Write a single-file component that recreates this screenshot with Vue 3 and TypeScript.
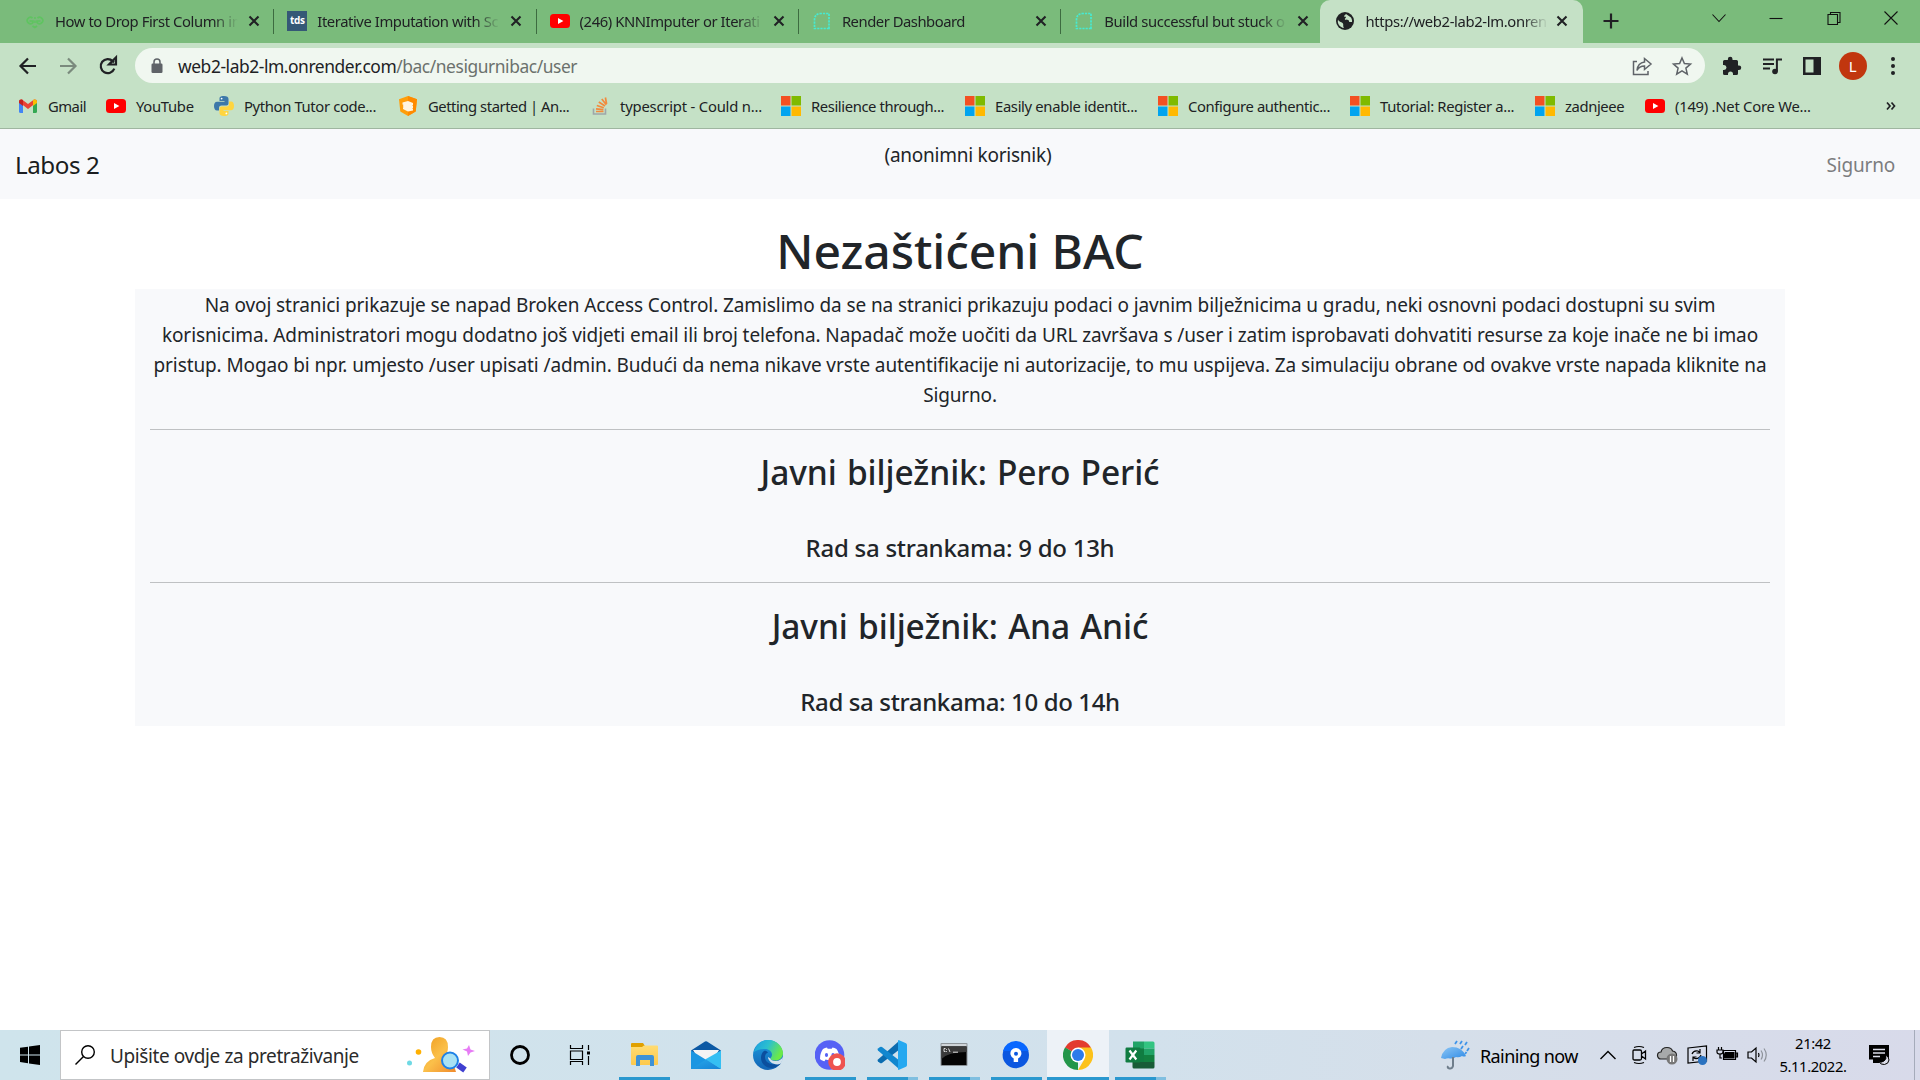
<script setup lang="ts">
interface Tab { icon: string; title: string; ls: number; active?: boolean }
interface Bookmark { icon: string; label: string; width: number; ls: number }
interface App { icon: string; state: '' | 'open' | 'multi' | 'active' }

const tabs: Tab[] = [
  { icon: 'gfg', title: 'How to Drop First Column in', ls: -0.42 },
  { icon: 'tds', title: 'Iterative Imputation with Sc', ls: -0.42 },
  { icon: 'yt', title: '(246) KNNImputer or Iterati', ls: -0.42 },
  { icon: 'render', title: 'Render Dashboard', ls: -0.48 },
  { icon: 'render', title: 'Build successful but stuck o', ls: -0.38 },
  { icon: 'globe', title: 'https://web2-lab2-lm.onren', ls: -0.36, active: true },
]

const bookmarks: Bookmark[] = [
  { icon: 'gmail', label: 'Gmail', width: 38, ls: -0.5 },
  { icon: 'yt', label: 'YouTube', width: 58, ls: -0.3 },
  { icon: 'python', label: 'Python Tutor code...', width: 134, ls: -0.36 },
  { icon: 'nest', label: 'Getting started | An...', width: 142, ls: -0.45 },
  { icon: 'stack', label: 'typescript - Could n...', width: 141, ls: -0.2 },
  { icon: 'ms', label: 'Resilience through...', width: 134, ls: -0.4 },
  { icon: 'ms', label: 'Easily enable identit...', width: 143, ls: -0.33 },
  { icon: 'ms', label: 'Configure authentic...', width: 142, ls: -0.37 },
  { icon: 'ms', label: 'Tutorial: Register a...', width: 135, ls: -0.35 },
  { icon: 'ms', label: 'zadnjeee', width: 60, ls: -0.4 },
  { icon: 'yt', label: '(149) .Net Core We...', width: 140, ls: -0.25 },
]

const apps: App[] = [
  { icon: 'explorer', state: 'open' },
  { icon: 'mail', state: '' },
  { icon: 'edge', state: '' },
  { icon: 'discord', state: 'open' },
  { icon: 'vscode', state: 'multi' },
  { icon: 'cmd', state: 'multi' },
  { icon: 'sourcetree', state: 'open' },
  { icon: 'chrome', state: 'active' },
  { icon: 'excel', state: 'multi' },
]

const intro: string[] = [
  'Na ovoj stranici prikazuje se napad Broken Access Control. Zamislimo da se na stranici prikazuju podaci o javnim bilježnicima u gradu, neki osnovni podaci dostupni su svim',
  'korisnicima. Administratori mogu dodatno još vidjeti email ili broj telefona. Napadač može uočiti da URL završava s /user i zatim isprobavati dohvatiti resurse za koje inače ne bi imao',
  'pristup. Mogao bi npr. umjesto /user upisati /admin. Budući da nema nikave vrste autentifikacije ni autorizacije, to mu uspijeva. Za simulaciju obrane od ovakve vrste napada kliknite na',
  'Sigurno.',
]

const notaries = [
  { name: 'Pero Perić', hours: '9 do 13h' },
  { name: 'Ana Anić', hours: '10 do 14h' },
]
</script>

<template>
  <div class="screen">
    <svg class="defs" width="0" height="0">
      <defs>
        <linearGradient id="gEdgeA" x1="0" y1="0" x2="1" y2="0.4"><stop offset="0" stop-color="#1b9de0" /><stop offset=".5" stop-color="#2bbfd0" /><stop offset="1" stop-color="#6bea48" /></linearGradient>
        <linearGradient id="gEdgeB" x1="0" y1="0" x2="0" y2="1"><stop offset="0" stop-color="#1d9ce0" /><stop offset="1" stop-color="#1263b4" /></linearGradient>
        <linearGradient id="gPerson" x1="0" y1="0" x2="1" y2="1"><stop offset="0" stop-color="#ee9a1c" /><stop offset=".5" stop-color="#fbc04a" /><stop offset="1" stop-color="#f08a2c" /></linearGradient>
        <linearGradient id="gFolder" x1="0" y1="0" x2="0" y2="1"><stop offset="0" stop-color="#ffdc72" /><stop offset="1" stop-color="#fdc94d" /></linearGradient>
        <linearGradient id="gMail" x1="0" y1="0" x2="1" y2="1"><stop offset="0" stop-color="#28a8ea" /><stop offset="1" stop-color="#1683d6" /></linearGradient>
        <linearGradient id="gUmb" x1="0" y1="0" x2="1" y2="1"><stop offset="0" stop-color="#8cc6f5" /><stop offset="1" stop-color="#2f8be6" /></linearGradient>
        <symbol id="i-gfg" viewBox="0 0 20 20"><g fill="none" stroke="#5fc460" stroke-width="1.7"><path d="M7.500 7A3.200 3.200 0 1 0 8 11.500V10H4.500M12.500 7A3.200 3.200 0 1 1 12 11.500V10h3.500" /><path d="M7.500 15l2.300 1.500 2.300-1.500" /></g><path d="M9.200 6h1.500v2H9.200zM9.200 9.500h1.500v2.500H9.200z" fill="#5fc460" /></symbol>
        <symbol id="i-yt" viewBox="0 0 20 20"><rect x="0" y="3" width="20" height="14" rx="3.500" fill="#f00" /><path d="M8 7l5.400 3L8 13z" fill="#fff" /></symbol>
        <symbol id="i-render" viewBox="0 0 20 20"><path d="M17 17.500H2.500V9q0-6.500 6.500-6.500h8z" fill="none" stroke="#46ead2" stroke-width="1.700" stroke-dasharray="2.200 1" /></symbol>
        <symbol id="i-globe" viewBox="0 0 20 20"><circle cx="10" cy="10" r="9" fill="#202124" /><path d="M3 8.500c1 2.500 3 2 4.500 3.500s0 2.500 1.500 5C5 16.500 2 13 3 8.500zM11 3l5 3.500c1 2 1.300 3 1 4.500-2 0-3 .5-3-1s-3-1-4-1.500 1-1.500 1-2.500-2 .5-2-1z" fill="#c5e1c6" /></symbol>
        <symbol id="i-gmail" viewBox="0 0 20 20"><path d="M1 4.500v11q0 1.500 1.500 1.500H5V8z" fill="#4285f4" /><path d="M19 4.500v11q0 1.500-1.500 1.500H15V8z" fill="#34a853" /><path d="M1 6v-.5q0-2.500 3-2L10 8l6-4.500q3-.5 3 2V6l-9 7z" fill="#ea4335" /><path d="M15 4.300l1-.8q3-.5 3 2V7l-4 3z" fill="#fbbc04" /><path d="M1 5.500q0-2.500 3-2l1 .8V10L1 7z" fill="#c5221f" /></symbol>
        <symbol id="i-python" viewBox="0 0 20 20"><path d="M10 0C5.800 0 5.500 1.500 5.500 2.800V5h5v.8H3C1 5.800 0 7.500 0 10s1 4.500 3 4.500h2v-2.800Q5 9.500 7.500 9.500h5q2 0 2-2V3Q14.500 0 10 0z" fill="#3d78a9" /><path d="M10 20c4.200 0 4.500-1.500 4.500-2.800V15h-5v-.8H17c2 0 3-1.700 3-4.200s-1-4.500-3-4.500h-2v2.800q0 2.200-2.500 2.200h-5q-2 0-2 2V17q0 3 4.500 3z" fill="#ffd53f" /><circle cx="7.600" cy="2.600" r=".9" fill="#fff" /><circle cx="12.400" cy="17.400" r=".9" fill="#fff" /></symbol>
        <symbol id="i-nest" viewBox="0 0 20 20"><path d="M10 0l9 3.200-1.300 12.300L10 20l-7.700-4.500L1 3.200z" fill="#ff9e0b" /><path d="M10 0l9 3.200-1.300 12.300L10 20z" fill="#ff8a00" /><path d="M4.500 6.500L10 5l5 2v2l-.8.500.8.500v2l-.8.500.8.500v1.500L10 15.500 5 13v-1.500l.8-.5L5 10.500V9.500l.8-.5-1.300-.5z" fill="#fff4e0" /></symbol>
        <symbol id="i-stack" viewBox="0 0 20 20"><path d="M3.500 12.500v5.500h12v-5.500" fill="none" stroke="#9fa6a9" stroke-width="1.600" /><path d="M6 15.500h7.500M6 12.800l7.400.9M6.800 9.500l7 2.200M8.800 6l6.200 4M11.800 3l4.500 5.800M15.400 1.500l1.200 6.500" stroke="#f28a3c" stroke-width="1.700" /></symbol>
        <symbol id="i-ms" viewBox="0 0 20 20"><path d="M0 0h9.500v9.500H0z" fill="#f35022" /><path d="M10.500 0H20v9.500h-9.500z" fill="#7fba00" /><path d="M0 10.500h9.500V20H0z" fill="#01a4ef" /><path d="M10.500 10.500H20V20h-9.500z" fill="#ffb901" /></symbol>

        <symbol id="i-explorer" viewBox="0 0 30 30"><path d="M2 4q0-1 1-1h11l2 3-2 3H2z" fill="#e0a000" /><path d="M2 7h11l2-1.500h13q1 0 1 1V24q0 1-1 1H3q-1 0-1-1z" fill="url(#gFolder)" /><path d="M7 26V17q0-2 2-2h14q2 0 2 2v9h-4v-6h-10v6z" fill="#3e92d6" /></symbol>
        <symbol id="i-mail" viewBox="0 0 30 30"><path d="M0 10.500L14 1.500q1-.7 2 0l14 9L24 20H5z" fill="#0c59a4" /><path d="M2 10h26l-6 10H8z" fill="#f4f4f4" /><path d="M0 10.500L30 29H0z" fill="#1b96e2" /><path d="M30 10.500V29L14 19.500z" fill="#35bff3" /><path d="M0 29l15-9.500L30 29z" fill="url(#gMail)" /></symbol>
        <symbol id="i-edge" viewBox="0 0 30 30"><circle cx="15" cy="15" r="15" fill="url(#gEdgeB)" /><path d="M1 12C3 4 9 0 15 0c9 0 15 7 15 13 0 5-4 7.500-7.500 7.500-3.500 0-5-1-5-2s1.500-1.500 1.500-4c0-3-3-5.500-7-5.500-5 0-9 1.500-11 3z" fill="url(#gEdgeA)" /><path d="M11 11c-4 3-4 10 0 14 4 4 11 4 16-.5 1.500-1.500.5-2-.5-1.500C21 26 12 24 12 17c0-2 1-4 3-4.500-1-1.500-3-2-4-1.500z" fill="#0b4f9e" /><path d="M17.500 18.500c0 1.300 2 2.500 5 2.500 4 0 6-2 7.500-4-.2 4-2 6-2.500 6.800C22 26 15 22 15 17z" fill="#d3e2ec" /></symbol>
        <symbol id="i-discord" viewBox="0 0 30 30"><circle cx="14.500" cy="15" r="14.800" fill="#5661f5" /><path d="M5 19c0-5 1.500-8 3-10q2-1.200 4-1.500l.7 1.200h4L17.500 7.500q2 .3 4 1.500c1.500 2 3 5 3 10-1.500 1.500-3 2-4.500 2.200l-1-1.700q-4.200 1.400-8.500 0l-1 1.700C8 21 6.500 20.500 5 19z" fill="#fff" /><ellipse cx="11.500" cy="15" rx="1.600" ry="1.900" fill="#5661f5" /><ellipse cx="18" cy="15" rx="1.600" ry="1.900" fill="#5661f5" /><circle cx="22" cy="22" r="8.800" fill="#ee5350" /><circle cx="22" cy="22" r="3.900" fill="#fff" /></symbol>
        <symbol id="i-vscode" viewBox="0 0 30 30"><path d="M22 1L1 19.500q-1 1 0 2L3 23q1 .7 2 0L23 9z" fill="#0b6cb0" /><path d="M22 29L1 10.500q-1-1 0-2L3 7q1-.7 2 0l18 14z" fill="#1187cf" /><path d="M21.500 0L29 3.200q1 .5 1 1.800v20q0 1.300-1 1.800L21.500 30q-.8-.5-.5-2V2q-.2-1.500.5-2z" fill="#25a8f0" /></symbol>
        <symbol id="i-cmd" viewBox="0 0 30 30"><rect x="1.500" y="3" width="27" height="23" rx="1" fill="#8d9499" /><rect x="2.500" y="4" width="25" height="2" fill="#cfd4d8" /><path d="M2.500 6.500h25V25h-25z" fill="#050505" /><path d="M2.500 6.500h25V12Q9 12 2.500 19z" fill="#3a3a3a" /><path d="M5 8.500v3M7.500 9v.8M7.500 11v.8M9.500 8.500l1.500 3.500M14 12.200h5M5 8.500h1.500M5 11.500h1.500" stroke="#ddd" stroke-width="1" /></symbol>
        <symbol id="i-sourcetree" viewBox="0 0 30 30"><circle cx="14.800" cy="15" r="13.200" fill="#0b57e0" /><path d="M2 11a13.200 13.200 0 0 1 25.600 0z" fill="#0867ff" /><path d="M12.700 22v-3.500a5.500 5.500 0 1 1 4.400 0V22z" fill="#fff" /><circle cx="15" cy="13.800" r="2" fill="#0b57e0" /></symbol>
        <symbol id="i-chrome" viewBox="0 0 30 30"><path d="M15 15L2 7.500A15 15 0 0 1 28 7.500z" fill="#e33b2e" /><path d="M15 15L15 30A15 15 0 0 1 2 7.500z" fill="#23964a" /><path d="M28 7.500H15v8l6.500 3.500L15 30A15 15 0 0 0 28 7.500z" fill="#fcc21b" /><path d="M2 7.500L8.700 19 15 16z" fill="#23964a" /><circle cx="15" cy="15" r="7.500" fill="#fff" /><circle cx="15" cy="15" r="6" fill="#2d7bea" /></symbol>
        <symbol id="i-excel" viewBox="0 0 30 30"><path d="M8 1.500h11V15H8z" fill="#21a366" /><path d="M19 1.500h9q1.500 0 1.500 1.500v5.500H19z" fill="#33c481" /><path d="M19 8.500h10.500V15H19z" fill="#21a366" /><path d="M8 8.500h11V22H8z" fill="#107c41" /><path d="M19 15h10.500v7H19z" fill="#12803f" /><path d="M7.500 22h22v5q0 1.500-1.500 1.500H9q-1.500 0-1.500-1.500z" fill="#185c37" /><rect x=".5" y="7.500" width="15" height="15" rx="1.200" fill="#107c41" /><path d="M4.500 10.500l6.800 9M11.300 10.500l-6.800 9" stroke="#fff" stroke-width="2.200" /></symbol>
      </defs>
    </svg>

    <header class="tabstrip">
      <div class="tabs">
        <div v-for="(t, i) in tabs" :key="i" class="tab" :class="{ active: t.active, last: i === 4 }">
          <span v-if="t.icon === 'tds'" class="tds">tds</span>
          <svg v-else class="ico"><use :href="'#i-' + t.icon" /></svg>
          <span class="tab-title" :style="{ letterSpacing: t.ls + 'px' }">{{ t.title }}</span>
          <svg class="x" viewBox="0 0 12 12"><path d="M1.500 1.500l9 9M10.500 1.500l-9 9" /></svg>
        </div>
      </div>
      <svg class="plus" viewBox="0 0 16 16"><path d="M8 .5v15M.5 8h15" /></svg>
      <div class="winctl">
        <svg viewBox="0 0 16 16"><path d="M1.500 4.500L8 11.500l6.500-7" /></svg>
        <svg viewBox="0 0 16 16"><path d="M1.500 8.500h13" stroke-width="1.300" /></svg>
        <svg viewBox="0 0 16 16"><path d="M2 4.500h9.500v10H2zM4.500 4V2.500H14V12.500h-2" stroke-width="1.300" /></svg>
        <svg viewBox="0 0 16 16"><path d="M1.500 1.500l13 13M14.500 1.500l-13 13" /></svg>
      </div>
    </header>

    <div class="toolbar">
      <svg class="nav" viewBox="0 0 20 20"><path d="M18 10H3M10 2.500L2.500 10l7.500 7.500" /></svg>
      <svg class="nav dim" viewBox="0 0 20 20"><path d="M2 10h15M10 2.500l7.500 7.500-7.500 7.500" /></svg>
      <svg class="nav" viewBox="0 0 20 20"><path d="M16.300 12.600A7 7 0 1 1 14.800 5.200L16 6.500" /><path d="M18 1.500v7h-7z" fill="#202124" stroke="none" /></svg>
      <div class="omnibox">
        <svg class="lock" viewBox="0 0 12 16"><rect x=".5" y="5.500" width="11" height="9.500" rx="1.200" fill="#5f6368" /><path d="M3 6V4a3 3 0 0 1 6 0v2" fill="none" stroke="#5f6368" stroke-width="1.500" /></svg>
        <span class="url">web2-lab2-lm.onrender.com<i>/bac/nesigurnibac/user</i></span>
        <svg class="oi" viewBox="0 0 20 20"><path d="M5 5.500H1.500v13H16V15M12.500 2.500L19 8l-6.500 5.500V10C9 10 6.500 11.500 5 14.500 5.500 9.500 8 6.500 12.500 6z" /></svg>
        <svg class="oi star" viewBox="0 0 20 20"><path d="M10 2l2.400 5.600 6.100.5-4.600 4 1.400 6L10 14.900 4.700 18.100l1.400-6-4.600-4 6.100-.5z" /></svg>
      </div>
      <div class="ext">
        <svg viewBox="0 0 20 20"><path fill="#202124" d="M17 9.500h-1V5.500q0-1.500-1.500-1.500h-4V3a2.300 2.300 0 0 0-4.600 0v1H2.500Q1 4 1 5.500V9h1a2.500 2.500 0 0 1 0 5H1v3.500Q1 19 2.500 19H6v-1a2.500 2.500 0 0 1 5 0v1h3.500q1.500 0 1.500-1.500V14h1a2.250 2.250 0 0 0 0-4.500z" /></svg>
        <svg viewBox="0 0 20 20"><path d="M1 3.500h11M1 8h11M1 12.500h7" fill="none" stroke="#202124" stroke-width="2" /><circle cx="13" cy="15.500" r="2.800" fill="#202124" /><path d="M14.900 15.500V3.500H20" fill="none" stroke="#202124" stroke-width="2" /></svg>
        <svg viewBox="0 0 20 20"><path fill="#202124" fill-rule="evenodd" d="M1 1h18v18H1zM3.500 3.500v13h8v-13z" /></svg>
        <span class="avatar">L</span>
        <svg viewBox="0 0 20 20" fill="#202124"><circle cx="10" cy="3" r="2" /><circle cx="10" cy="10" r="2" /><circle cx="10" cy="17" r="2" /></svg>
      </div>
    </div>

    <nav class="bookmarks">
      <div v-for="(b, i) in bookmarks" :key="i" class="bm">
        <svg class="ico"><use :href="'#i-' + b.icon" /></svg>
        <span :style="{ width: b.width + 'px', letterSpacing: b.ls + 'px' }">{{ b.label }}</span>
      </div>
      <svg class="more" viewBox="0 0 10 10"><path d="M1 1.500L4 5 1 8.500M5.500 1.500l3 3.500-3 3.500" /></svg>
    </nav>

    <div class="navbar">
      <span class="brand">Labos 2</span>
      <span class="who">(anonimni korisnik)</span>
      <span class="safe">Sigurno</span>
    </div>

    <main>
      <h1>Nezaštićeni BAC</h1>
      <section class="card">
        <p><span v-for="(l, i) in intro" :key="i" :class="'l' + i">{{ l }}</span></p>
        <article v-for="n in notaries" :key="n.name">
          <hr />
          <h3>Javni bilježnik: {{ n.name }}</h3>
          <h5>Rad sa strankama: {{ n.hours }}</h5>
        </article>
      </section>
    </main>

    <footer class="taskbar">
      <div class="start"><svg viewBox="0 0 20 20" width="20" height="20"><path d="M0 2.800L8 1.700V9.400H0zM9 1.500L20 0v9.400H9zM0 10.400h8v7.800L0 17.100zM9 10.400h11V20L9 18.400z" /></svg></div>
      <div class="search">
        <svg class="mag" viewBox="0 0 20 20"><circle cx="13" cy="7" r="6.300" /><path d="M8.500 11.500L.5 19.500" /></svg>
        <span>Upišite ovdje za pretraživanje</span>
        <svg class="persona" viewBox="0 0 68 36"><circle cx="2.500" cy="26" r="2.500" fill="#6fd9e4" /><circle cx="11.500" cy="15" r="2.800" fill="#ffb000" /><path d="M16 35q1-11 12-14-4-5-4-11 0-10 8.500-10T41 10q0 6-4 11 10 3 12 14z" fill="url(#gPerson)" /><path d="M51 28l7 5" stroke="#3f3fd0" stroke-width="6" /><circle cx="43" cy="23.500" r="8" fill="#a9e2f4" stroke="#1f82e6" stroke-width="2" /><path d="M62 8l1.500 4.500L68 14l-4.500 1.500L61 19l-1-4.500-4.500-2 4.500-1z" fill="#e77cf5" /></svg>
      </div>
      <div class="cell"><svg viewBox="0 0 22 22" width="22" height="22"><circle cx="11" cy="11" r="8.500" fill="none" stroke="#000" stroke-width="2.800" /></svg></div>
      <div class="cell tv"><svg viewBox="0 0 20 20" width="20" height="20"><path d="M.5 0v3.500h12V0M.5 20v-3.500h12V20M.5 6h12v8.500H.5zM18.500 0v5M18.500 11v9" fill="none" stroke="#000" stroke-width="1.200" /><path d="M17 6.500h3v3h-3z" /></svg></div>
      <div v-for="a in apps" :key="a.icon" class="app" :class="a.state"><svg width="30" height="30"><use :href="'#i-' + a.icon" /></svg></div>
      <div class="tray">
        <svg class="umb" viewBox="0 0 30 30"><path d="M0 18Q2 8 11 7q10 0 14 9-2 1-4 0-3 2-6 1-3 2-6 1.500Q6 18 4 19z" fill="url(#gUmb)" /><path d="M12 17v9q-1 3-3.500 2.500T7 26" fill="none" stroke="#6f7e8c" stroke-width="2" /><path d="M14 4l2-3M19 4l2-3M24 5l2-3M20 9l2-3M26 11l2-3M24 14l1.500-2" stroke="#3f94ea" stroke-width="1.800" /></svg>
        <span class="rain">Raining now</span>
        <svg class="t1" viewBox="0 0 16 10"><path d="M.5 9L8 1.500 15.500 9" fill="none" stroke="#000" stroke-width="1.400" /></svg>
        <svg class="t2" viewBox="0 0 15 20"><path d="M2 2.500Q7 .5 12 2.500M2 17.500q5 2 10 0" fill="none" stroke="#000" stroke-width="1.200" /><path d="M1 6q0-1 1-1h6q1.500 0 1.500 1.500v7Q9.500 15 8 15H2.500Q1 15 1 13.500zM9.500 9l4-3v8l-4-3" fill="none" stroke="#000" stroke-width="1.300" /></svg>
        <svg class="t3" viewBox="0 0 21 20"><path d="M4 14a3.500 3.500 0 0 1 0-7q1-4.500 6-4.500 4.500 0 5.500 3.500 4 .5 4 4.500 0 3.500-3 3.500z" fill="#a7a9aa" stroke="#222" stroke-width="1.200" /><circle cx="15" cy="14" r="5.500" fill="#777" /><path d="M13.500 11v6M16.500 11v6" stroke="#fff" stroke-width="1.300" /></svg>
        <svg class="t4" viewBox="0 0 21 20"><path d="M1 3l18.500-2v15L1 18z" fill="none" stroke="#000" stroke-width="1.200" /><path d="M5 9q1.500-4 6-3l2 1.500M13 4v4H9.500M14 10q-1.500 4-6 3.500L6 12.500M6 16v-4h3.500" fill="none" stroke="#000" stroke-width="1.200" /><circle cx="15.500" cy="15.500" r="4.500" fill="#2a72c0" /></svg>
        <svg class="t5" viewBox="0 0 21 16"><path d="M1.500 0v3M4.500 0v3M0 3h6v2q0 2-3 2T0 5zM3 7v4h2" fill="none" stroke="#000" stroke-width="1.200" /><path d="M6.500 3.500h12v9h-12zM19 6h1.500v4H19z" fill="none" stroke="#000" stroke-width="1.200" /><path d="M8 5h9.500v6.500H7V7z" /></svg>
        <svg class="t6" viewBox="0 0 22 20"><path d="M1 7h3.500L9 3v14l-4.500-4H1z" fill="none" stroke="#000" stroke-width="1.200" /><path d="M11.500 8q1 2 0 4" fill="none" stroke="#000" stroke-width="1.200" /><path d="M14 5.500q3 4.500 0 9M17 3.500q4.500 6.500 0 13" fill="none" stroke="#8e939b" stroke-width="1.200" /></svg>
        <div class="clock"><span>21:42</span><span>5.11.2022.</span></div>
        <svg class="note" viewBox="0 0 20 20"><path d="M0 0h20v12.500L15 18H7l-3 0v-3.500H0z" /><path d="M4 4.500h12M4 8h12M4 11.500h7" stroke="#dcdde9" stroke-width="1.300" /><path d="M16.500 10q1.500 4-1.500 6t-5 .5q1.500 3.500 5.500 3T20 15q0-3.500-3.500-5z" fill="#dcdde9" stroke="#000" stroke-width="1" /></svg>
        <i class="peek"></i>
      </div>
    </footer>
  </div>
</template>

<style>
html, body { margin: 0; background: #fff; }
</style>

<style scoped>
* { box-sizing: border-box; }
.screen { width: 1920px; height: 1080px; overflow: hidden; display: flex; flex-direction: column; background: #fff; font-family: "Noto Sans", "Open Sans", sans-serif; color: #212529; white-space: nowrap; }
.defs { position: absolute; }
svg { display: block; flex: none; overflow: visible; }
.ico { width: 20px; height: 20px; }

.tabstrip { height: 43px; flex: none; background: #7abb7b; display: flex; }
.tabs { display: flex; margin-left: 12px; }
.tab { width: 262.300px; height: 43px; padding: 0 0 1px 13px; display: flex; align-items: center; position: relative; font-size: 14.800px; color: #202124; }
.tab::after { content: ""; position: absolute; right: 0; top: 9px; width: 1px; height: 25px; background: #3d6b40; }
.tab.last::after, .tab.active::after { display: none; }
.tab-title { width: 184px; margin-left: 10px; line-height: 40px; -webkit-mask-image: linear-gradient(90deg, #000 158px, transparent 183px); mask-image: linear-gradient(90deg, #000 158px, transparent 183px); }
.tab.active { background: #c5e1c6; border-radius: 10px 10px 0 0; margin-left: -3px; padding-left: 15px; }
.tab .x { width: 12px; height: 12px; margin-left: 9px; }
.tab.active .x { margin-left: 7px; }
.x path { stroke: #202124; stroke-width: 2.100; }
.tds { width: 20px; height: 20px; background: #355876; color: #fff; font: 700 10px/19px "Open Sans", sans-serif; text-align: center; letter-spacing: -0.300px; }
.plus { width: 16px; height: 16px; margin: 13px 0 0 20px; }
.plus path { stroke: #202124; stroke-width: 2.200; }
.winctl { display: flex; margin-left: auto; gap: 41.400px; padding: 10px 21px 0 0; }
.winctl svg { width: 16px; height: 16px; }
.winctl path { fill: none; stroke: #111; stroke-width: 1.100; }

.toolbar { height: 46px; flex: none; background: #c5e1c6; display: flex; align-items: center; padding-left: 18px; }
.nav { width: 20px; height: 20px; margin-right: 20px; margin-top: -1px; }
.nav path { fill: none; stroke: #202124; stroke-width: 2.200; }
.nav.dim { opacity: .45; }
.omnibox { width: 1570px; height: 35px; margin: -1px 0 0 -3px; border-radius: 18px; background: #f0f7f0; display: flex; align-items: center; padding: 0 13px 0 16px; }
.lock { width: 12px; height: 16px; }
.url { margin-left: 15px; margin-right: auto; font-size: 17.400px; letter-spacing: -0.430px; color: #202124; }
.url i { font-style: normal; color: #6b716d; }
.oi { width: 20px; height: 20px; }
.oi path { fill: none; stroke: #5f6368; stroke-width: 1.500; }
.star { margin-left: 20px; }
.ext { display: flex; align-items: center; margin-left: 17px; gap: 20.200px; }
.ext svg { width: 20px; height: 20px; }
.avatar { width: 28px; height: 28px; margin: 0 -4px; border-radius: 50%; background: #c1360e; color: #fff; font-size: 15px; line-height: 28px; text-align: center; }

.bookmarks { height: 40px; flex: none; background: #c5e1c6; border-bottom: 1px solid #9fb6a0; display: flex; align-items: center; padding: 0 0 6px 18px; color: #202124; font-size: 14.800px; }
.bm { display: flex; align-items: center; margin-right: 20px; }
.bm .ico { margin-right: 10px; }
.more { width: 10px; height: 10px; margin-left: auto; margin-right: 24px; }
.more path { fill: none; stroke: #202124; stroke-width: 1.700; }

.navbar { height: 70px; flex: none; background: #f8f9fb; display: flex; justify-content: space-between; padding: 0 25px 0 15px; }
.brand { font-size: 24.200px; letter-spacing: -0.450px; line-height: 71px; color: #1a1d20; }
.who { font-size: 19px; letter-spacing: -0.250px; line-height: 30px; margin: 11px 0 0 10px; }
.safe { font-size: 19px; letter-spacing: -0.200px; line-height: 73px; color: #7c7d7f; }

main { flex: 1; text-align: center; padding-top: 22px; }
h1 { margin: 0 0 8px; font-size: 48px; font-weight: 500; line-height: 60px; letter-spacing: -0.050px; }
.card { width: 1650px; height: 437px; margin: 0 auto; padding: 1px 15px 0; background: #f8f9fb; }
p { margin: 0; font-size: 19px; line-height: 30px; }
p span { display: block; }
.l0 { letter-spacing: -0.088px; }
.l1 { letter-spacing: -0.094px; }
.l2 { letter-spacing: -0.110px; }
.l3 { letter-spacing: -0.150px; }
hr { margin: 19px 0 21px; height: 1px; border: 0; background: #bfc1c3; }
h3 { margin: 0 0 40px; font-size: 33.500px; font-weight: 500; line-height: 42px; letter-spacing: -0.080px; word-spacing: 1.600px; }
h5 { margin: 0; font-size: 24px; font-weight: 500; line-height: 30px; letter-spacing: -0.260px; }
article + article hr { margin-bottom: 22px; }
article + article h5 { letter-spacing: -0.360px; }

.taskbar { height: 50px; flex: none; display: flex; background: linear-gradient(90deg, #cfe4ec 0, #d2e1ec 60%, #d5dfea 75%, #d8daea 100%); }
.start { width: 60px; display: flex; align-items: center; justify-content: center; }
.search { width: 430px; background: #fff; border: 1px solid #c3c5c7; display: flex; align-items: center; padding-left: 14px; font-size: 19px; letter-spacing: -0.400px; color: #2b2b2b; }
.search span { margin: 1px 0 0 15px; width: 297px; }
.mag { width: 20px; height: 20px; }
.mag path, .mag circle { fill: none; stroke: #000; stroke-width: 1.400; }
.persona { width: 68px; height: 36px; }
.cell { width: 60px; display: flex; align-items: center; justify-content: center; }
.tv { width: 63px; padding-right: 3px; }
.app { width: 62px; display: flex; align-items: center; justify-content: center; position: relative; }
.app::after { content: ""; position: absolute; left: 6px; bottom: 0; width: 51px; height: 3px; }
.app.open::after { background: #2a98cf; }
.app.multi::after { background: linear-gradient(90deg, #2a98cf 41px, #80bfe0 41px); }
.app.active { background: #edf2f7; }
.app.active::after { left: 0; width: 62px; background: #2a98cf; }
.tray { flex: 1; display: flex; align-items: center; padding-left: 270px; }
.umb { width: 30px; height: 30px; }
.rain { font-size: 18px; letter-spacing: -0.600px; margin: 2px 0 0 9px; width: 120px; color: #000; }
.t1 { width: 16px; height: 10px; }
.t2 { width: 15px; height: 20px; margin-left: 16px; }
.t3 { width: 21px; height: 20px; margin-left: 10px; }
.t4 { width: 21px; height: 20px; margin-left: 9px; }
.t5 { width: 21px; height: 16px; margin-left: 9px; }
.t6 { width: 22px; height: 20px; margin-left: 9px; }
.clock { width: 86px; display: flex; flex-direction: column; align-items: center; font-size: 14.800px; letter-spacing: -0.400px; line-height: 23px; color: #000; margin-left: 1px; }
.note { width: 20px; height: 20px; margin-left: 13px; }
.peek { width: 1px; height: 50px; background: #a5abba; margin-left: 25px; }
</style>
